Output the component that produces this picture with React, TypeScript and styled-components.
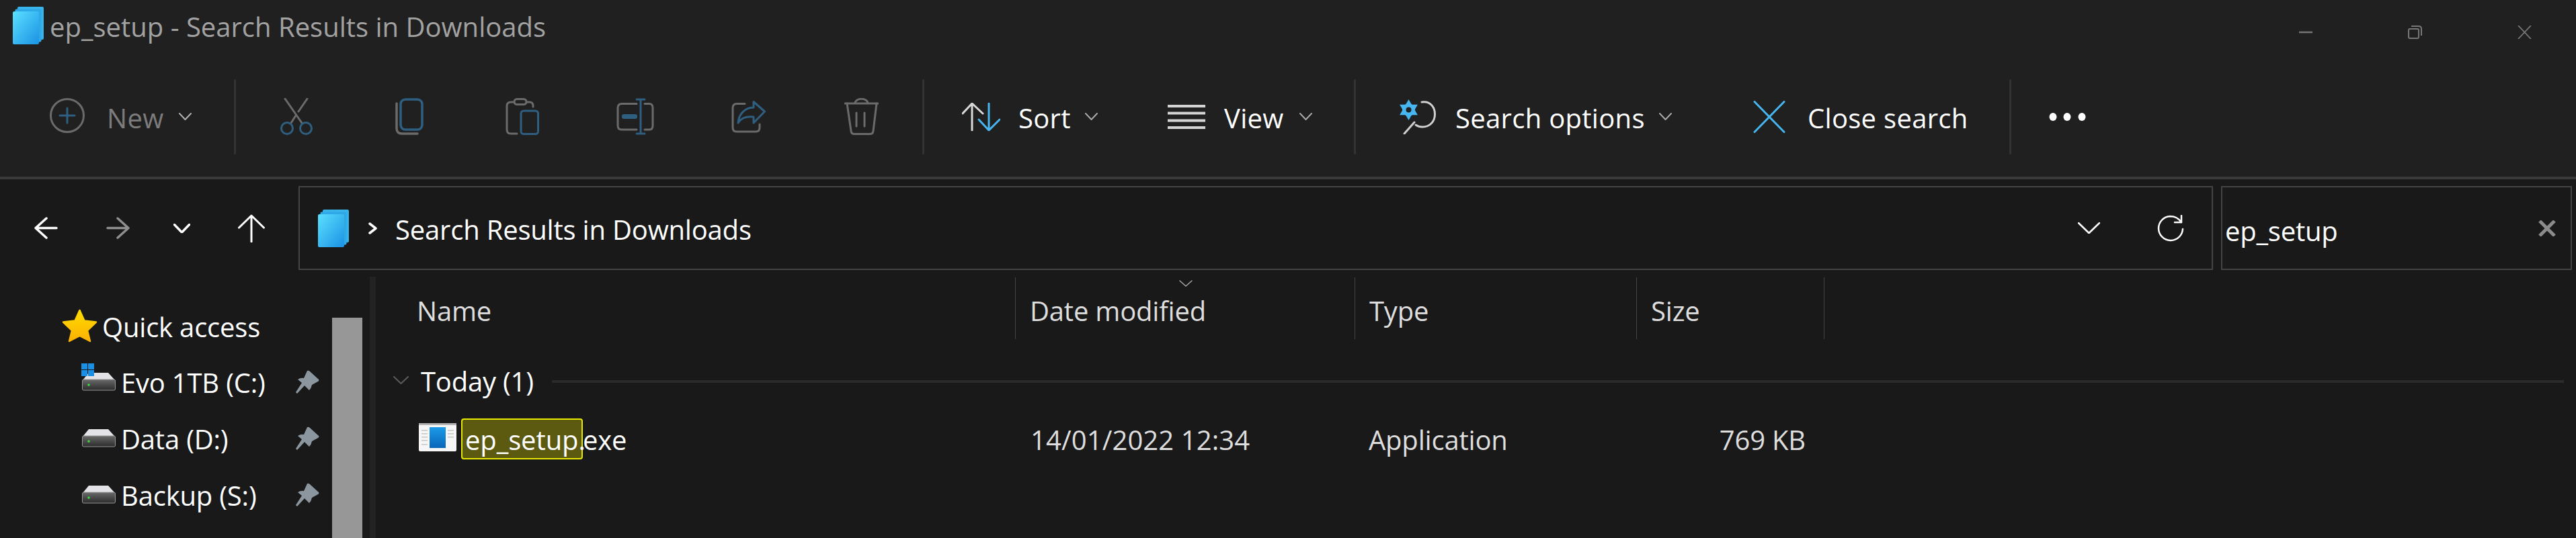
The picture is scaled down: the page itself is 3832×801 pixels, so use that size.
import React from 'react';
import styled, { createGlobalStyle } from 'styled-components';

const GREY = '#6b6b6b';
const DIM_BLUE = '#2f5f80';
const BLUE = '#47b6f0';

const GlobalStyle = createGlobalStyle`
  html, body {
    margin: 0;
    padding: 0;
    background: #191919;
  }
  * {
    box-sizing: border-box;
  }
`;

const Window = styled.div`
  width: 3832px;
  height: 801px;
  overflow: hidden;
  display: flex;
  flex-direction: column;
  background: #191919;
  color: #fff;
  font-family: 'Open Sans', 'Liberation Sans', sans-serif;
  font-size: 40px;
  letter-spacing: -0.2px;
  white-space: nowrap;
`;

const Top = styled.div`
  background: #202020;
  border-bottom: 4px solid #3a3a3a;
  height: 267px;
  flex: none;
`;

const TitleBar = styled.div`
  height: 84px;
  display: flex;
  align-items: flex-start;
  padding: 10px 66px 0 19px;
`;

const Title = styled.div`
  margin: 2px 0 0 9px;
  line-height: 56px;
  letter-spacing: 0;
  color: #a2a2a2;
`;

const WindowControls = styled.div`
  margin: 28px 0 0 auto;
  display: flex;
  gap: 142px;
  align-items: center;
`;

const CommandBar = styled.div`
  height: 179px;
  display: flex;
  align-items: center;
`;

const Separator = styled.div<{ $ml: number }>`
  width: 3px;
  height: 112px;
  margin-left: ${({ $ml }) => $ml}px;
  background: #333;
  border-radius: 2px;
  flex: none;
`;

const CommandButton = styled.div<{ $ml: number }>`
  display: flex;
  align-items: center;
  margin-left: ${({ $ml }) => $ml}px;
  flex: none;
`;

const IconStrip = styled.div`
  display: flex;
  margin-left: 6px;
`;

const IconSlot = styled.div`
  width: 168px;
  display: flex;
  justify-content: center;
  align-items: center;
`;

const Label = styled.span<{ $w: number; $gap: number; $dim?: boolean }>`
  width: ${({ $w }) => $w}px;
  margin-left: ${({ $gap }) => $gap}px;
  padding-top: 3px;
  letter-spacing: 0.3px;
  color: ${({ $dim }) => ($dim ? '#7c7c7c' : '#fff')};
`;

const ChevronBox = styled.span`
  margin-left: 22px;
  display: flex;
`;

const NavBar = styled.div`
  height: 145px;
  flex: none;
  display: flex;
  align-items: center;
`;

const NavButtons = styled.div`
  width: 444px;
  flex: none;
  display: flex;
  align-items: center;
  padding-left: 50px;
`;

const NavGap = styled.span<{ $w: number }>`
  width: ${({ $w }) => $w}px;
  flex: none;
`;

const AddressBox = styled.div`
  width: 2848px;
  height: 125px;
  flex: none;
  display: flex;
  align-items: center;
  padding: 0 41px 0 27px;
  border: 2px solid #444;
`;

const Crumb = styled.span`
  margin: 0 27px 0 29px;
  display: flex;
`;

const AddressText = styled.span`
  padding-top: 4px;
`;

const AddressActions = styled.div`
  margin-left: auto;
  display: flex;
  align-items: center;
  gap: 83px;
`;

const SearchBox = styled.div`
  width: 522px;
  height: 125px;
  margin-left: 12px;
  flex: none;
  display: flex;
  align-items: center;
  justify-content: space-between;
  padding: 0 22px 0 4px;
  border: 2px solid #444;
`;

const SearchText = styled.span`
  padding-top: 8px;
`;

const Body = styled.div`
  flex: 1;
  min-height: 0;
  display: flex;
`;

const NavPane = styled.div`
  width: 494px;
  flex: none;
  padding-top: 31px;
`;

const NavHeading = styled.div`
  height: 83px;
  display: flex;
  align-items: center;
  gap: 7px;
  padding-left: 92px;
`;

const NavHeadingText = styled.span`
  padding-top: 3px;
`;

const NavRow = styled.div`
  height: 84px;
  display: flex;
  align-items: center;
  padding: 0 19px 0 122px;
`;

const DriveName = styled.span`
  margin-left: 8px;
  padding-top: 3px;
`;

const PinBox = styled.span`
  margin-left: auto;
  display: flex;
`;

const ScrollThumb = styled.div`
  width: 45px;
  margin: 61px 11px 0 0;
  flex: none;
  background: #979797;
`;

const Splitter = styled.div`
  width: 9px;
  flex: none;
  background: #232323;
`;

const Main = styled.div`
  flex: 1;
  min-width: 0;
`;

const Columns = `
  display: grid;
  grid-template-columns: 951px 505px 419px 280px;
`;

const HeaderRow = styled.div`
  ${Columns}
  height: 92px;
  margin-top: 1px;
`;

const HeaderCell = styled.div<{ $first?: boolean; $last?: boolean }>`
  position: relative;
  display: flex;
  align-items: center;
  padding: 6px 0 0 ${({ $first }) => ($first ? 61 : 21)}px;
  border-left: ${({ $first }) => ($first ? 'none' : '1px solid #444')};
  border-right: ${({ $last }) => ($last ? '1px solid #444' : 'none')};
  color: #dedede;
`;

const SortMark = styled.span`
  position: absolute;
  left: 243px;
  top: 4px;
  display: flex;
`;

const GroupRow = styled.div`
  height: 86px;
  display: flex;
  align-items: center;
  padding: 35px 18px 0 26px;
`;

const GroupName = styled.span`
  margin: 0 27px 0 18px;
  padding-top: 3px;
`;

const GroupLine = styled.div`
  flex: 1;
  height: 4px;
  margin-top: 5px;
  background: #2a2a2a;
`;

const FileRow = styled.div`
  ${Columns}
  height: 61px;
  margin-top: 32px;
  align-items: center;
  color: #dedede;
`;

const NameCell = styled.div`
  display: flex;
  align-items: center;
  padding-left: 64px;
  color: #fff;
`;

const FileIconBox = styled.span`
  display: flex;
  margin: 0 7px 6px 0;
`;

const Match = styled.span`
  height: 61px;
  width: 181px;
  flex: none;
  display: flex;
  align-items: center;
  padding: 1px 0 0 4px;
  letter-spacing: -0.1px;
  background: #5c5a10;
  border: 2px solid #e6e600;
  border-radius: 4px;
`;

const ExeText = styled.span`
  padding-top: 1px;
`;

const DataCell = styled.div<{ $left: number }>`
  padding-left: ${({ $left }) => $left}px;
  padding-top: 1px;
`;

const DateText = styled.span`
  letter-spacing: 0.1px;
`;

const SizeCell = styled.div`
  text-align: right;
  padding: 1px 28px 0 0;
`;

function Chevron({ w = 19, h = 11, color = '#a8a8a8', sw = 2 }: { w?: number; h?: number; color?: string; sw?: number }) {
  return (
    <svg width={w} height={h} viewBox={`0 0 ${w} ${h}`} fill="none">
      <polyline points={`1,1 ${w / 2},${h - 1} ${w - 1},1`} stroke={color} strokeWidth={sw} strokeLinecap="round" strokeLinejoin="round" />
    </svg>
  );
}

function LibraryIcon({ id }: { id: string }) {
  return (
    <svg width="46" height="56" viewBox="0 0 46 56">
      <defs>
        <linearGradient id={id} x1="0" y1="0" x2="1" y2="1">
          <stop offset="0" stopColor="#5be0ff" />
          <stop offset="1" stopColor="#1a92e4" />
        </linearGradient>
      </defs>
      <rect x="7" y="0" width="39" height="49" rx="2" fill="#38b4ea" />
      <rect x="3.5" y="3.5" width="39" height="49" rx="2" fill="#2fa8e8" />
      <rect x="0" y="7" width="39" height="49" rx="2" fill={`url(#${id})`} />
    </svg>
  );
}

function NewIcon() {
  return (
    <svg width="52" height="56" viewBox="0 0 52 56" fill="none">
      <circle cx="26" cy="26" r="24.5" stroke={GREY} strokeWidth="3" />
      <path d="M26 15V37M15 26H37" stroke={DIM_BLUE} strokeWidth="3" strokeLinecap="round" />
    </svg>
  );
}

function CutIcon() {
  return (
    <svg width="50" height="55" viewBox="0 0 50 55" fill="none" strokeWidth="3" strokeLinecap="round">
      <path d="M8 1L33 37M41 1L28 20M24 26L17 37" stroke={GREY} />
      <circle cx="11" cy="45" r="8.5" stroke={DIM_BLUE} />
      <circle cx="39" cy="45" r="8.5" stroke={DIM_BLUE} />
    </svg>
  );
}

function CopyIcon() {
  return (
    <svg width="42" height="55" viewBox="0 0 42 55" fill="none" strokeWidth="3.5" strokeLinecap="round">
      <path d="M2 8V45Q2 53 10 53H33" stroke={GREY} />
      <rect x="8" y="2" width="32" height="45" rx="7" stroke={DIM_BLUE} />
    </svg>
  );
}

function PasteIcon() {
  return (
    <svg width="50" height="55" viewBox="0 0 50 55" fill="none" strokeWidth="3" strokeLinecap="round">
      <path d="M13 6H8Q2 6 2 12V47Q2 53 8 53H17M31 6H36Q41 6 41 12V13" stroke={GREY} />
      <rect x="13" y="1.5" width="18" height="8" rx="4" stroke={GREY} />
      <rect x="23" y="19" width="25.5" height="34.5" rx="4" stroke={DIM_BLUE} />
    </svg>
  );
}

function RenameIcon() {
  return (
    <svg width="56" height="55" viewBox="0 0 56 55" fill="none" strokeWidth="3" strokeLinecap="round">
      <path d="M30 8.5H8Q2 8.5 2 14.5V41Q2 47 8 47H30M42 8.5H49Q54 8.5 54 14.5V41Q54 47 49 47H42" stroke={GREY} />
      <path d="M36 2V53M30 2H42M30 53H42" stroke={DIM_BLUE} />
      <rect x="8" y="24" width="23" height="7" rx="3" fill={DIM_BLUE} />
    </svg>
  );
}

function ShareIcon() {
  return (
    <svg width="51" height="48" viewBox="0 0 51 48" fill="none" strokeWidth="3" strokeLinecap="round" strokeLinejoin="round">
      <path d="M20 4.5H8Q2 4.5 2 10.5V40Q2 46 8 46H36Q42 46 42 40V35" stroke={GREY} />
      <path d="M33 1.5L49.5 16L33 33V24C22 23 14 26 10 33C11 20 20 10 33 10Z" stroke={DIM_BLUE} />
    </svg>
  );
}

function TrashIcon() {
  return (
    <svg width="51" height="55" viewBox="0 0 51 55" fill="none" strokeWidth="3" stroke={GREY} strokeLinecap="round">
      <path d="M1 8H50M16 8C16 -1 35 -1 35 8" />
      <path d="M4 8L10 49Q10.5 53.5 15 53.5H38Q42.500 53.5 43 49L48 8" />
      <path d="M18 22V42M30 22V42" />
    </svg>
  );
}

function SortIcon() {
  return (
    <svg width="57" height="42" viewBox="0 0 57 42" fill="none" strokeWidth="3" strokeLinecap="round" strokeLinejoin="round">
      <path d="M15 41V1M1 16L15 1L31 16" stroke="#d8d8d8" />
      <path d="M40 1V41M25 25L40 41L56 25" stroke={BLUE} />
    </svg>
  );
}

function ViewIcon() {
  return (
    <svg width="56" height="36" viewBox="0 0 56 36" fill="none" stroke="#d4d4d4" strokeWidth="4">
      <path d="M0 2H56M0 12.500H56M0 23.500H56M0 34H56" />
    </svg>
  );
}

function SearchOptionsIcon() {
  return (
    <svg width="54" height="52" viewBox="0 0 54 52" fill="none" strokeLinecap="round">
      <path d="M33 4C46 2 52.500 12 52.500 22C52.500 34 44 41 34 41C30 41 27 40 24 38M22 34L7 51" stroke="#cfcfcf" strokeWidth="3" />
      <polygon points="13.5,0 26.900,23.250 0.100,23.250" fill={BLUE} />
      <polygon points="13.5,31 26.900,7.750 0.100,7.750" fill={BLUE} />
      <circle cx="13.5" cy="15.5" r="9.5" fill={BLUE} />
      <circle cx="13.5" cy="15.5" r="4" fill="#202020" />
    </svg>
  );
}

function CloseSearchIcon() {
  return (
    <svg width="48" height="48" viewBox="0 0 48 48" fill="none" stroke={BLUE} strokeWidth="3" strokeLinecap="round">
      <path d="M2 1.500L46 46.500M46 1.500L2 46.500" />
    </svg>
  );
}

function MoreIcon() {
  return (
    <svg width="56" height="12" viewBox="0 0 56 12" fill="#fff">
      <ellipse cx="6" cy="6" rx="5.500" ry="6" />
      <ellipse cx="27" cy="6" rx="5.500" ry="6" />
      <ellipse cx="49" cy="6" rx="5.500" ry="6" />
    </svg>
  );
}

function MinimizeIcon() {
  return (
    <svg width="20" height="20" viewBox="0 0 20 20" fill="none" stroke="#777" strokeWidth="2.500">
      <path d="M0 10H20" />
    </svg>
  );
}

function RestoreIcon() {
  return (
    <svg width="21" height="20" viewBox="0 0 21 20" fill="none" stroke="#777" strokeWidth="2">
      <rect x="1" y="5" width="15" height="14" rx="2" />
      <path d="M5 1H16Q20 1 20 5V15" />
    </svg>
  );
}

function WindowCloseIcon() {
  return (
    <svg width="21" height="20" viewBox="0 0 21 20" fill="none" stroke="#777" strokeWidth="1.800">
      <path d="M1 0L20 20M20 0L1 20" />
    </svg>
  );
}

function ArrowLeft({ color = '#fff', flip = false }: { color?: string; flip?: boolean }) {
  return (
    <svg width="36" height="33" viewBox="0 0 36 33" fill="none" stroke={color} strokeWidth="3.500" strokeLinecap="round" strokeLinejoin="round" transform={flip ? 'scale(-1,1)' : undefined}>
      <path d="M34 16.500H3M19 2L3 16.500L19 31" />
    </svg>
  );
}

function ArrowUp() {
  return (
    <svg width="40" height="42" viewBox="0 0 40 42" fill="none" stroke="#fff" strokeWidth="3" strokeLinecap="round" strokeLinejoin="round">
      <path d="M20 41V2M1.500 20L20 2L38.500 20" />
    </svg>
  );
}

function RefreshIcon() {
  return (
    <svg width="42" height="40" viewBox="0 0 42 40" fill="none" stroke="#fff" strokeWidth="2.500" strokeLinecap="round" strokeLinejoin="round">
      <path d="M38 11C34 5 28 2 21 2A18 18 0 1 0 40 21" />
      <path d="M38 1V11H28" />
    </svg>
  );
}

function ClearIcon() {
  return (
    <svg width="26" height="24" viewBox="0 0 26 24" fill="none" stroke="#8c8c8c" strokeWidth="5">
      <path d="M2 1L24 23M24 1L2 23" />
    </svg>
  );
}

function StarIcon() {
  return (
    <svg width="53" height="50" viewBox="0 0 53 50">
      <defs>
        <linearGradient id="star" x1="0" y1="0" x2="0" y2="1">
          <stop offset="0" stopColor="#ffdc00" />
          <stop offset="1" stopColor="#fdb002" />
        </linearGradient>
      </defs>
      <polygon points="26.5,2 33.5,17.5 51,19.5 38,32 42,48 26.5,40 11,48 15,32 2,19.5 19.5,17.5" fill="url(#star)" stroke="url(#star)" strokeWidth="2.500" strokeLinejoin="round" />
    </svg>
  );
}

function DriveIcon({ id, system = false }: { id: string; system?: boolean }) {
  return (
    <svg width="50" height="26" viewBox="0 0 50 26" overflow="visible">
      <defs>
        <linearGradient id={id} x1="0" y1="0" x2="0" y2="1">
          <stop offset="0" stopColor="#6a6a6a" />
          <stop offset="1" stopColor="#2b2b2b" />
        </linearGradient>
      </defs>
      <polygon points="10,0 39,0 49,11 1,11" fill="#e4e4e8" />
      <rect x="0.500" y="10" width="49" height="16" rx="2" fill={`url(#${id})`} stroke="#9a9a9a" strokeWidth="1" />
      <circle cx="10" cy="18" r="1.800" fill="#3ddc3d" />
      {system && (
        <g fill="#1a8fe3">
          <rect x="-1" y="-14" width="9" height="9" />
          <rect x="9" y="-14" width="9" height="9" />
          <rect x="-1" y="-4" width="9" height="9" />
          <rect x="9" y="-4" width="9" height="9" />
        </g>
      )}
    </svg>
  );
}

function PinIcon() {
  return (
    <svg width="35" height="35" viewBox="0 0 35 35">
      <path d="M17 1Q19 0 21 2L33 13Q36 15 33 17L24 22Q23 27 20 30L13 23L2 35L0 33L9 19L3 14Q7 11 12 12Z" fill="#8b969e" />
    </svg>
  );
}

function ExeIcon() {
  const left = [10, 15, 20, 25, 31];
  const right = [10, 15, 20];
  return (
    <svg width="56" height="42" viewBox="0 0 56 42">
      <defs>
        <linearGradient id="exe" x1="0" y1="0" x2="0" y2="1">
          <stop offset="0" stopColor="#1a9be8" />
          <stop offset="1" stopColor="#0a66b8" />
        </linearGradient>
      </defs>
      <rect x="0" y="0" width="56" height="42" rx="2" fill="#f6f6f6" />
      <rect x="0" y="0" width="56" height="3" fill="#b4b4b4" />
      <rect x="16" y="6" width="24" height="31" fill="url(#exe)" />
      {left.map((y) => (
        <rect key={y} x="4" y={y} width="9" height="1.500" fill="#c6c6c6" />
      ))}
      {right.map((y) => (
        <rect key={y} x="43" y={y} width="9" height="1.500" fill="#c6c6c6" />
      ))}
    </svg>
  );
}

const drives = [
  { id: 'c', name: 'Evo 1TB (C:)', system: true },
  { id: 'd', name: 'Data (D:)', system: false },
  { id: 's', name: 'Backup (S:)', system: false },
];

export default function App() {
  return (
    <Window>
      <GlobalStyle />
      <Top>
        <TitleBar>
          <LibraryIcon id="titleLib" />
          <Title>ep_setup - Search Results in Downloads</Title>
          <WindowControls>
            <MinimizeIcon />
            <RestoreIcon />
            <WindowCloseIcon />
          </WindowControls>
        </TitleBar>
        <CommandBar>
          <CommandButton $ml={74}>
            <NewIcon />
            <Label $w={85} $gap={33} $dim>New</Label>
            <ChevronBox><Chevron color="#b0b0b0" /></ChevronBox>
          </CommandButton>
          <Separator $ml={63} />
          <IconStrip>
            <IconSlot><CutIcon /></IconSlot>
            <IconSlot><CopyIcon /></IconSlot>
            <IconSlot><PasteIcon /></IconSlot>
            <IconSlot><RenameIcon /></IconSlot>
            <IconSlot><ShareIcon /></IconSlot>
            <IconSlot><TrashIcon /></IconSlot>
          </IconStrip>
          <Separator $ml={7} />
          <CommandButton $ml={56}>
            <SortIcon />
            <Label $w={77} $gap={27}>Sort</Label>
            <ChevronBox><Chevron /></ChevronBox>
          </CommandButton>
          <CommandButton $ml={104}>
            <ViewIcon />
            <Label $w={90} $gap={28}>View</Label>
            <ChevronBox><Chevron /></ChevronBox>
          </CommandButton>
          <Separator $ml={62} />
          <CommandButton $ml={65}>
            <SearchOptionsIcon />
            <Label $w={281} $gap={29}>Search options</Label>
            <ChevronBox><Chevron /></ChevronBox>
          </CommandButton>
          <CommandButton $ml={121}>
            <CloseSearchIcon />
            <Label $w={233} $gap={33}>Close search</Label>
          </CommandButton>
          <Separator $ml={67} />
          <CommandButton $ml={56}>
            <MoreIcon />
          </CommandButton>
        </CommandBar>
      </Top>
      <NavBar>
        <NavButtons>
          <ArrowLeft />
          <NavGap $w={72} />
          <ArrowLeft color="#8f8f8f" flip />
          <NavGap $w={64} />
          <Chevron w={25} h={14} color="#fff" sw={3.5} />
          <NavGap $w={71} />
          <ArrowUp />
        </NavButtons>
        <AddressBox>
          <LibraryIcon id="addressLib" />
          <Crumb>
            <svg width="13" height="18" viewBox="0 0 13 18" fill="none" stroke="#fff" strokeWidth="3.500" strokeLinecap="round" strokeLinejoin="round">
              <path d="M2 2L11 9L2 16" />
            </svg>
          </Crumb>
          <AddressText>Search Results in Downloads</AddressText>
          <AddressActions>
            <Chevron w={33} h={17} color="#fff" sw={2.5} />
            <RefreshIcon />
          </AddressActions>
        </AddressBox>
        <SearchBox>
          <SearchText>ep_setup</SearchText>
          <ClearIcon />
        </SearchBox>
      </NavBar>
      <Body>
        <NavPane>
          <NavHeading>
            <StarIcon />
            <NavHeadingText>Quick access</NavHeadingText>
          </NavHeading>
          {drives.map((d) => (
            <NavRow key={d.id}>
              <DriveIcon id={`drive-${d.id}`} system={d.system} />
              <DriveName>{d.name}</DriveName>
              <PinBox><PinIcon /></PinBox>
            </NavRow>
          ))}
        </NavPane>
        <ScrollThumb />
        <Splitter />
        <Main>
          <HeaderRow>
            <HeaderCell $first>Name</HeaderCell>
            <HeaderCell>
              Date modified
              <SortMark><Chevron w={20} h={10} sw={1.5} /></SortMark>
            </HeaderCell>
            <HeaderCell>Type</HeaderCell>
            <HeaderCell $last>Size</HeaderCell>
          </HeaderRow>
          <GroupRow>
            <Chevron w={23} h={12} color="#5c5c5c" />
            <GroupName>Today (1)</GroupName>
            <GroupLine />
          </GroupRow>
          <FileRow>
            <NameCell>
              <FileIconBox><ExeIcon /></FileIconBox>
              <Match>ep_setup.</Match>
              <ExeText>exe</ExeText>
            </NameCell>
            <DataCell $left={23}><DateText>14/01/2022 12:34</DateText></DataCell>
            <DataCell $left={21}>Application</DataCell>
            <SizeCell>769 KB</SizeCell>
          </FileRow>
        </Main>
      </Body>
    </Window>
  );
}
